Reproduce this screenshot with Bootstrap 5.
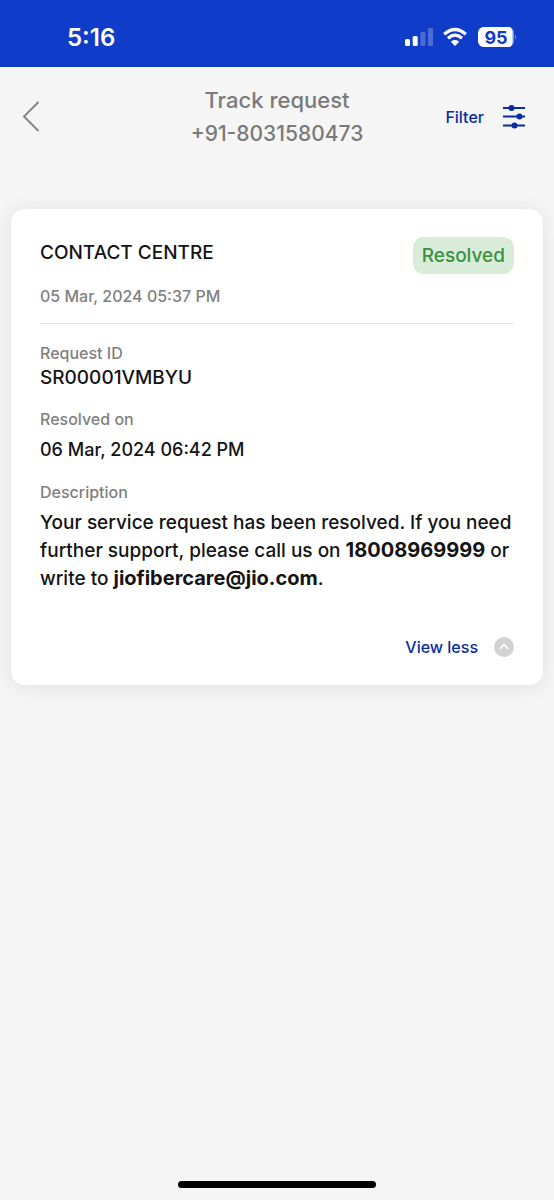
<!DOCTYPE html>
<html lang="en">
<head>
<meta charset="utf-8">
<meta name="viewport" content="width=device-width, initial-scale=1">
<title>Track request</title>
<link href="https://cdn.jsdelivr.net/npm/bootstrap@5.3.0/dist/css/bootstrap.min.css" rel="stylesheet">
<style>
  body { background: #f5f5f5; font-family: Inter, "Liberation Sans", sans-serif; font-weight: 500; color: #141414; }
  svg { display: block; flex: none; }
  .status-bar { background: #0f3cc9; height: 67px; padding: 8px 37px 0 67px; }
  .clock { font-size: 24px; font-weight: 600; line-height: 28px; }
  .app-header { display: grid; grid-template-columns: 1fr auto 1fr; padding: 16px 20px 0; min-height: 142px; align-items: start; }
  .app-title { font-size: 22px; line-height: 34px; font-weight: 500; color: #7a7a7a; }
  .app-number { font-size: 21px; }
  .back-btn, .filter-btn { height: 68px; }
  .plain-btn { background: none; border: 0; padding: 0; }
  .filter-btn { padding-right: 8px; }
  .text-action { font-size: 16px; line-height: 24px; font-weight: 500; color: #0a2ba3; }
  .request-card { margin: 0 11px; padding: 28px 29px 26px; border: 0; border-radius: 14px; box-shadow: 0 2px 18px rgba(40, 50, 110, .1); }
  .card-heading { font-size: 19px; line-height: 32px; font-weight: 500; }
  .state-pill { font-size: 19px; line-height: 37px; padding: 0 9px; border-radius: 11px; background: #d9ecd9; color: #3c9140; }
  .muted-text { font-size: 16px; line-height: 24px; color: #7f7f7f; font-weight: 500; }
  .request-date { padding: 10px 0 15px; border-bottom: 1px solid #e2e2e4; }
  .field-value { font-size: 19px; line-height: 28px; }
  .field-value b { font-size: 20px; font-weight: 700; line-height: 24px; }
  .id-value { line-height: 26px; }
  .date-value { font-size: 18px; }
  .field-first { margin-top: 17px; }
  .field-next { margin-top: 16px; }
  .field-next .muted-text { margin-bottom: 5px; }
  .card-toggle { margin-top: 42px; }
  .home-bar { width: 198px; height: 7px; border-radius: 4px; background: #000; margin-bottom: 12px; }
</style>
</head>
<body class="d-flex flex-column min-vh-100">
  <div class="status-bar d-flex justify-content-between align-items-center text-white">
    <span class="clock">5:16</span>
    <svg width="112" height="24" viewBox="0 0 112 24" aria-hidden="true">
      <g fill="#fff">
        <rect x="0" y="13" width="5" height="7" rx="1.5"/>
        <rect x="7.7" y="10" width="5" height="10" rx="1.5"/>
        <rect x="15.4" y="6" width="5" height="14" rx="1.5" opacity=".25"/>
        <rect x="23" y="2" width="5" height="18" rx="1.5" opacity=".25"/>
        <path d="M50 19 46.800 15.800Q50 13.600 53.200 15.800Z" stroke="#fff" stroke-width="1.500" stroke-linejoin="round"/>
      </g>
      <g fill="none" stroke="#fff" stroke-width="3.200">
        <path d="M39.200 8.200Q50-1.200 60.800 8.200"/>
        <path d="M43 12.200Q50 6.200 57 12.200"/>
      </g>
      <rect x="73" y="1" width="36" height="20" rx="6" fill="#fff" opacity=".45"/>
      <path d="M79 1H105Q107.500 2.500 107.500 5V17Q107.500 19.500 105 21H79A6 6 0 0 1 73 15V7A6 6 0 0 1 79 1Z" fill="#fff"/>
      <path d="M110 8.500Q112 11 110 13.500Z" fill="#fff" opacity=".5"/>
      <text x="91" y="17.500" text-anchor="middle" font-size="18" font-weight="700" fill="#0f3cc9">95</text>
    </svg>
  </div>

  <header class="app-header">
    <button type="button" class="back-btn plain-btn d-flex align-items-center" aria-label="Back">
      <svg width="22" height="34" viewBox="0 0 22 34" fill="none" stroke="#858585" stroke-width="2"><path d="M18.500 2 4 16.500 18.500 31"/></svg>
    </button>
    <h1 class="app-title text-center mb-0">Track request<span class="app-number d-block">+91-8031580473</span></h1>
    <button type="button" class="filter-btn plain-btn text-action d-flex align-items-center justify-content-end">
      <span class="me-3">Filter</span>
      <svg width="26" height="26" viewBox="0 0 26 26" stroke="#0a2ba3" stroke-width="2" fill="#0a2ba3" aria-hidden="true">
        <path d="M3 4H25M3 12.500H25M3 21.500H25"/>
        <g stroke="none"><circle cx="11.500" cy="4" r="3"/><circle cx="19.500" cy="12.500" r="3"/><circle cx="14.500" cy="21.500" r="3"/></g>
      </svg>
    </button>
  </header>

  <main class="flex-grow-1">
    <article class="request-card card">
      <div class="d-flex justify-content-between align-items-start">
        <h2 class="card-heading mb-0">CONTACT CENTRE</h2>
        <span class="state-pill">Resolved</span>
      </div>
      <div class="request-date muted-text">05 Mar, 2024 05:37 PM</div>

      <div class="field-first">
        <div class="muted-text">Request ID</div>
        <div class="field-value id-value">SR00001VMBYU</div>
      </div>
      <div class="field-next">
        <div class="muted-text">Resolved on</div>
        <div class="field-value date-value">06 Mar, 2024 06:42 PM</div>
      </div>
      <div class="field-next">
        <div class="muted-text">Description</div>
        <p class="field-value mb-0">Your service request has been resolved. If you need further support, please call us on <b>18008969999</b> or write to <b>jiofibercare@jio.com</b>.</p>
      </div>

      <button type="button" class="card-toggle plain-btn text-action d-flex align-items-center align-self-end">
        <span class="me-3">View less</span>
        <svg width="20" height="20" viewBox="0 0 20 20" aria-hidden="true"><circle cx="10" cy="10" r="10" fill="#d2d2d2"/><path d="M5.700 12 10 7.700 14.300 12" fill="none" stroke="#fff" stroke-width="1.700"/></svg>
      </button>
    </article>
  </main>

  <div class="home-bar mx-auto"></div>
  <script src="https://cdn.jsdelivr.net/npm/bootstrap@5.3.0/dist/js/bootstrap.bundle.min.js"></script>
</body>
</html>
